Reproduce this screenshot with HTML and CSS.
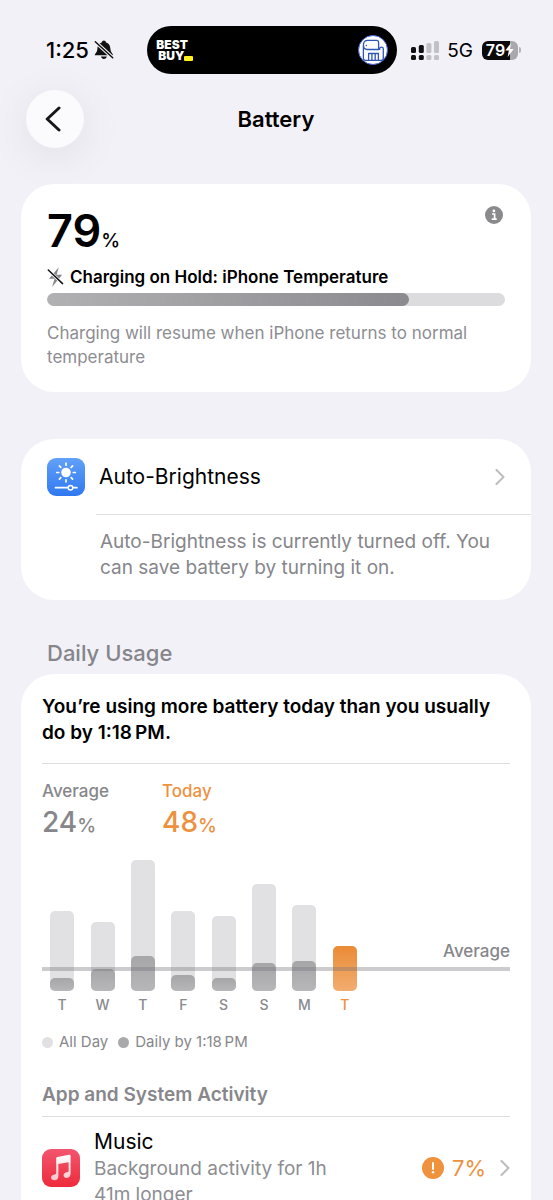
FILE: index.html
```html
<!DOCTYPE html>
<html lang="en">
<head>
<meta charset="utf-8">
<meta name="viewport" content="width=device-width, initial-scale=1">
<title>Battery</title>
<link rel="stylesheet" href="styles.css">
</head>
<body>
<div class="statusbar">
  <div class="status-left">
    <span class="clock">1:25</span>
    <svg class="bell" viewBox="0 0 20 20" width="20" height="20" aria-label="Silent">
      <path d="M.8 15.200c0-1.800 2.400-2.400 2.600-6.400C3.600 4.800 5.400 3 7.800 2.400 8.100 1.300 8.900.6 9.900.6s1.800.7 2.100 1.800c2.400.6 4.200 2.400 4.400 6.400.2 4 2.600 4.600 2.600 6.400z" fill="#111"/>
      <path d="M7 16.600h5.800c-.3 1.500-1.400 2.400-2.900 2.400S7.300 18.100 7 16.600z" fill="#111"/>
      <path d="M.5 1l18.500 17" stroke="#f2f1f7" stroke-width="3.600"/>
      <path d="M1.300 1.700l17.400 16" stroke="#111" stroke-width="1.500" stroke-linecap="round"/>
    </svg>
  </div>
  <div class="island">
    <div class="store"><span>BEST</span><span class="store-second">BUY<i class="store-tag"></i></span></div>
    <svg viewBox="0 0 30 30" width="30" height="30" aria-hidden="true">
      <circle cx="15" cy="15" r="14.500" fill="#fff" stroke="#3f62d8"/>
      <g fill="none" stroke="#2f55b5" stroke-width="1.300" stroke-linejoin="round">
        <path d="M5.400 10.300c0-3.200 1.400-5 4.200-5h9c1.200 0 2 .8 2 2v7.200H9.500c-2.800 0-4.100-1.400-4.100-4.200z"/>
        <path d="M5.400 11v12.300c0 1.300.7 2 2 2h15.900c1.300 0 2-.7 2-2v-9.500c0-2.300-3.700-2.300-3.700 0v1.200"/>
        <path d="M10.600 25.300v-6.800h9.800v6.800M13.900 18.500v6.800M17.200 18.500v6.800"/>
      </g>
      <circle cx="8.300" cy="10.500" r=".8" fill="#2f55b5"/>
    </svg>
  </div>
  <div class="status-right">
    <svg viewBox="0 0 28 20" width="28" height="20" aria-label="Signal">
      <g fill="#111"><rect x="0" y="7" width="5" height="6" rx="1.500"/><rect x="7.800" y="5" width="5" height="8" rx="1.500"/><rect x="0" y="15" width="5" height="5" rx="1.500"/><rect x="7.800" y="15" width="5" height="5" rx="1.500"/></g>
      <g fill="#c1c1c6"><rect x="15.400" y="3" width="5" height="10" rx="1.500"/><rect x="23" y="1" width="5" height="12" rx="1.500"/><rect x="15.400" y="15" width="5" height="5" rx="1.500"/><rect x="23" y="15" width="5" height="5" rx="1.500"/></g>
    </svg>
    <span class="network">5G</span>
    <div class="battery">
      <span>79</span>
      <svg viewBox="0 0 9 14" width="9" height="14" aria-hidden="true"><path d="M6 0L.3 7.600h3.500L2.700 14 8.700 6H5.100z" fill="#fff"/></svg>
    </div>
    <span class="battery-tip"></span>
  </div>
</div>

<header class="nav">
  <button class="back" aria-label="Back">
    <svg viewBox="0 0 16 26" width="16" height="26"><path d="M14 2L2.200 13 14 24" fill="none" stroke="#17171a" stroke-width="3" stroke-linecap="round" stroke-linejoin="round"/></svg>
  </button>
  <h1>Battery</h1>
</header>

<main>
  <section class="card charge">
    <div class="charge-top">
      <p class="level">79<span>%</span></p>
      <button class="info" aria-label="Information">
        <svg viewBox="0 0 18 18" width="18" height="18"><circle cx="9" cy="9" r="9" fill="#8a8a8d"/><circle cx="8.900" cy="4.900" r="1.400" fill="#fff"/><path d="M7 8h2.600v5M6.700 13.200h5" fill="none" stroke="#fff" stroke-width="1.700"/></svg>
      </button>
    </div>
    <h2 class="charge-state">
      <svg viewBox="0 0 18 20" width="18" height="20" aria-hidden="true"><path d="M11.800.2L2 11.800h5.600L5 20l10.200-12.200H9.600z" fill="#85858a"/><path d="M1 2.800l14.800 14" stroke="#fff" stroke-width="3"/><path d="M1.300 3l14.300 13.600" stroke="#111" stroke-width="1.500" stroke-linecap="round"/></svg>
      Charging on Hold: iPhone Temperature
    </h2>
    <div class="meter" role="progressbar" aria-valuenow="79" aria-valuemin="0" aria-valuemax="100" aria-label="Battery level"><div class="meter-fill" style="width:79%"></div></div>
    <p class="charge-note">Charging will resume when iPhone returns to normal temperature</p>
  </section>

  <section class="card suggestion">
    <a class="suggestion-row" href="#">
      <svg viewBox="0 0 38 38" width="38" height="38" aria-hidden="true">
        <defs><linearGradient id="blue" x2="0" y2="1"><stop stop-color="#62a1f8"/><stop offset="1" stop-color="#2f78f0"/></linearGradient></defs>
        <rect width="38" height="38" rx="9" fill="url(#blue)"/>
        <circle cx="19" cy="14.500" r="4.800" fill="#fff"/>
        <g stroke="#fff" stroke-width="1.700" stroke-linecap="round"><path d="M19 5.200v2M19 21.800v2M9.700 14.500h2M26.300 14.500h2M12.400 7.900l1.400 1.400M24.200 19.700l1.400 1.400M25.600 7.900l-1.400 1.400M13.800 19.700l-1.400 1.400"/><path d="M8.500 29.700h21.500"/></g>
        <circle cx="23.500" cy="29.700" r="2.300" fill="#3b81f2" stroke="#fff" stroke-width="1.500"/>
      </svg>
      <span class="row-title">Auto-Brightness</span>
      <svg class="chevron" viewBox="0 0 10 16" width="10" height="16" aria-hidden="true"><path d="M1.500 1l7 7-7 7"/></svg>
    </a>
    <p class="suggestion-note">Auto-Brightness is currently turned off. You can save battery by turning it on.</p>
  </section>

  <h2 class="section-title">Daily Usage</h2>
  <section class="card usage">
    <h3 class="summary">You’re using more battery today than you usually do by 1:18&#8239;PM.</h3>
    <div class="totals">
      <div class="total"><span class="total-label">Average</span><strong>24<small>%</small></strong></div>
      <div class="total today"><span class="total-label">Today</span><strong>48<small>%</small></strong></div>
    </div>
    <div class="chart">
      <div class="plot">
        <div class="bars">
          <div class="bar" style="height:80px"><i style="height:13px"></i></div>
          <div class="bar" style="height:69px"><i style="height:22px"></i></div>
          <div class="bar" style="height:131px"><i style="height:35px"></i></div>
          <div class="bar" style="height:80px"><i style="height:16px"></i></div>
          <div class="bar" style="height:75px"><i style="height:13px"></i></div>
          <div class="bar" style="height:107px"><i style="height:28px"></i></div>
          <div class="bar" style="height:86px"><i style="height:30px"></i></div>
          <div class="bar now" style="height:45px"></div>
        </div>
        <div class="average"><span>Average</span></div>
      </div>
      <div class="days"><span>T</span><span>W</span><span>T</span><span>F</span><span>S</span><span>S</span><span>M</span><span class="current">T</span></div>
      <div class="legend"><span class="key">All Day</span><span class="key dark">Daily by 1:18&#8239;PM</span></div>
    </div>
    <h3 class="activity-title">App and System Activity</h3>
    <a class="app" href="#">
      <svg viewBox="0 0 38 38" width="38" height="38" aria-hidden="true">
        <defs><linearGradient id="red" x2="0" y2="1"><stop stop-color="#f2566e"/><stop offset="1" stop-color="#ee2b3c"/></linearGradient><linearGradient id="note" x2="0" y2="1"><stop stop-color="#fff"/><stop offset="1" stop-color="#fbc5cb"/></linearGradient></defs>
        <rect width="38" height="38" rx="9" fill="url(#red)"/>
        <path d="M14.200 9.300c0-.8.400-1.200 1.200-1.400l11.500-2.200c1.100-.2 1.700.2 1.700 1.200v17.700c0 2.700-1.500 4.300-3.800 4.300-1.900 0-3.200-1-3.200-2.700 0-2.600 2.900-2.800 4.200-3.300.6-.2.800-.5.800-1.100v-8.500L16.400 15v11.900c0 2.700-1.500 4.400-4 4.400-2 0-3.300-1-3.300-2.700 0-2.500 2.700-2.900 4.200-3.400.6-.2.900-.5.900-1.200z" fill="url(#note)"/>
      </svg>
      <span class="app-text"><span class="app-name">Music</span><span class="app-detail">Background activity for 1h 41m longer</span></span>
      <svg class="alert" viewBox="0 0 22 22" width="22" height="22" aria-label="Warning"><circle cx="11" cy="11" r="11" fill="#ef913d"/><path d="M11 6v6" stroke="#fff" stroke-width="2" stroke-linecap="round"/><circle cx="11" cy="15.300" r="1.200" fill="#fff"/></svg>
      <span class="share">7%</span>
      <svg class="chevron" viewBox="0 0 10 16" width="10" height="16" aria-hidden="true"><path d="M1.500 1l7 7-7 7"/></svg>
    </a>
  </section>
</main>
</body>
</html>
```
FILE: styles.css
```css
* { box-sizing: border-box; }
html { height: 100%; }
body {
  margin: 0;
  height: 100%;
  overflow: hidden;
  background: #f2f1f7;
  color: #000;
  font-family: Inter, "Liberation Sans", sans-serif;
}
h1, h2, h3, p { margin: 0; }
button { border: 0; padding: 0; background: none; font: inherit; }
a { color: inherit; text-decoration: none; }
svg { display: block; flex: none; }

.statusbar {
  display: grid;
  grid-template-columns: 1fr 250px 1fr;
  align-items: center;
  padding: 26px 32px 0 24px;
}
.status-left { display: flex; align-items: center; gap: 5px; padding-left: 22px; }
.clock { font-size: 22px; font-weight: 500; }
.island {
  display: flex;
  align-items: center;
  justify-content: space-between;
  height: 48px;
  padding: 0 9px;
  border-radius: 24px;
  background: #000;
}
.store { display: flex; flex-direction: column; color: #fff; font-size: 12px; font-weight: 900; line-height: 11px; }
.store-second { display: flex; align-items: flex-end; padding-left: 2px; }
.store-tag { width: 9px; height: 5px; border-radius: 1px; background: #fff21f; }
.status-right { display: flex; align-items: center; padding-left: 14px; }
.network { padding-left: 8px; font-size: 19px; }
.battery {
  display: flex;
  align-items: center;
  justify-content: center;
  width: 36px;
  height: 19px;
  margin-left: 9px;
  border-radius: 6px;
  background: linear-gradient(90deg, #0b0b0b 79%, #a9a9ad 79%);
  color: #fff;
  font-size: 16px;
  font-weight: 600;
}
.battery-tip { width: 2px; height: 6px; margin-left: 1px; border-radius: 0 2px 2px 0; background: #b4b4b8; }

.nav {
  display: grid;
  grid-template-columns: 58px 1fr 58px;
  align-items: center;
  padding: 16px 27px 0 26px;
}
.back {
  display: flex;
  align-items: center;
  justify-content: center;
  height: 58px;
  padding-right: 4px;
  border-radius: 50%;
  background: #fbfbfe;
  box-shadow: 0 8px 44px rgba(0, 0, 0, 0.08);
}
h1 { text-align: center; font-size: 22px; font-weight: 600; line-height: 28px; }

main { padding: 36px 22px 0 21px; }
.card { border-radius: 33px; background: #fff; }
.charge { padding: 22px 26px 23px; }
.charge-top { display: flex; justify-content: space-between; align-items: flex-start; }
.level { font-size: 45px; font-weight: 600; line-height: 49px; }
.level span { font-size: 19px; font-weight: 500; }
.info { width: 20px; height: 18px; }
.charge-state { display: flex; align-items: center; gap: 5px; font-size: 17px; font-weight: 600; line-height: 24px; }
.meter { height: 13px; margin-top: 4px; overflow: hidden; border-radius: 7px; background: #dcdcde; }
.meter-fill { height: 100%; border-radius: 7px; background: linear-gradient(90deg, #b1b1b4, #8b8b8f); }
.charge-note { padding-top: 15px; color: #8d8d92; font-size: 17px; line-height: 24px; }

.suggestion { margin-top: 47px; padding: 0 0 19px 26px; }
.suggestion-row { display: flex; align-items: center; gap: 14px; height: 75px; padding-right: 26px; }
.row-title { flex: 1; font-size: 21px; line-height: 28px; }
.chevron path { fill: none; stroke: #bcbcc0; stroke-width: 2; stroke-linecap: round; stroke-linejoin: round; }
.suggestion-note { margin-left: 49px; padding: 14px 30px 0 4px; border-top: 1px solid #dedee1; color: #86868b; font-size: 19px; line-height: 26px; }

.section-title { padding: 39px 26px 7px; color: #85858a; font-size: 22px; font-weight: 500; line-height: 28px; }
.usage { padding: 20px 21px 40px; }
.summary { padding-bottom: 17px; border-bottom: 1px solid #dedee1; font-size: 19px; font-weight: 600; line-height: 26px; }
.totals { display: flex; padding-top: 17px; color: #87878b; }
.total { display: flex; flex-direction: column; width: 120px; }
.total-label { font-size: 17px; font-weight: 500; line-height: 20px; }
.total strong { padding-top: 4px; font-size: 28px; font-weight: 500; line-height: 34px; }
.total small { font-size: 19px; }
.today { color: #ee913f; }
.chart { padding-top: 17px; }
.plot { position: relative; height: 131px; }
.bars, .days { display: grid; grid-template-columns: repeat(8, 1fr); justify-items: center; width: 69%; }
.bars { height: 100%; align-items: end; }
.bar { display: flex; align-items: flex-end; width: 24px; border-radius: 5px; background: #e1e1e3; }
.bar i { width: 100%; border-radius: 5px; background: linear-gradient(#a6a6a9, #b7b7ba); }
.bar.now { background: linear-gradient(#ea8b36, #f2ad70); }
.average {
  position: absolute;
  right: 0;
  bottom: 20px;
  left: 0;
  border-bottom: 4px solid rgba(118, 118, 123, 0.37);
  color: #87878b;
  font-size: 17px;
  font-weight: 500;
  line-height: 32px;
  text-align: right;
}
.average span { display: block; }
.days { padding-top: 4px; color: #8a8a8e; font-size: 14px; font-weight: 500; line-height: 20px; }
.current { color: #ee913f; }
.legend { display: flex; gap: 10px; padding-top: 17px; color: #87878b; font-size: 15px; line-height: 20px; }
.key { display: flex; align-items: center; gap: 6px; }
.key::before { content: ""; width: 11px; height: 11px; border-radius: 50%; background: #e1e1e3; }
.key.dark::before { background: #a9a9ac; }
.activity-title { padding: 30px 0 8px; border-bottom: 1px solid #dedee1; color: #87878b; font-size: 19px; font-weight: 600; line-height: 26px; }
.app { display: flex; align-items: center; padding-top: 11px; }
.app-text { display: flex; flex: 1; flex-direction: column; padding: 0 60px 0 14px; }
.app-name { font-size: 21px; line-height: 28px; }
.app-detail { color: #8d8d92; font-size: 19px; line-height: 26px; }
.share { padding: 0 14px 0 8px; color: #ee913f; font-size: 22px; }
```
